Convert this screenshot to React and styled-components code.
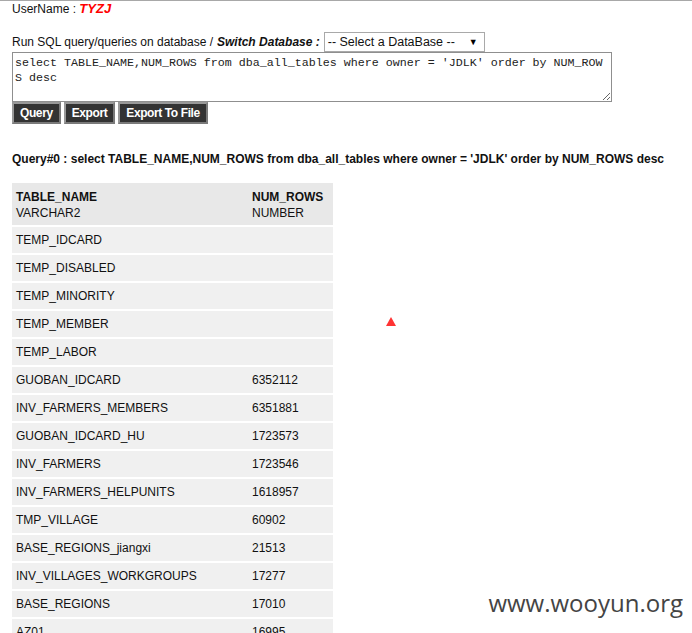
import styled, { createGlobalStyle } from "styled-components";

const rows = [
  ["TEMP_IDCARD", ""],
  ["TEMP_DISABLED", ""],
  ["TEMP_MINORITY", ""],
  ["TEMP_MEMBER", ""],
  ["TEMP_LABOR", ""],
  ["GUOBAN_IDCARD", "6352112"],
  ["INV_FARMERS_MEMBERS", "6351881"],
  ["GUOBAN_IDCARD_HU", "1723573"],
  ["INV_FARMERS", "1723546"],
  ["INV_FARMERS_HELPUNITS", "1618957"],
  ["TMP_VILLAGE", "60902"],
  ["BASE_REGIONS_jiangxi", "21513"],
  ["INV_VILLAGES_WORKGROUPS", "17277"],
  ["BASE_REGIONS", "17010"],
  ["AZ01", "16995"],
];

const sql = "select TABLE_NAME,NUM_ROWS from dba_all_tables where owner = 'JDLK' order by NUM_ROWS desc";

export default function App() {
  return (
    <>
      <Global />
      <Page>
        <UserLine>
          UserName : <UserName>TYZJ</UserName>
        </UserLine>

        <DbLine>
          Run SQL query/queries on database / <b><i>Switch Database :</i></b>
          <DbSelect>
            <span>-- Select a DataBase --</span>
            <Arrow>▼</Arrow>
          </DbSelect>
        </DbLine>

        <SqlBox defaultValue={sql} spellCheck={false} />

        <ButtonRow>
          <Btn>Query</Btn>
          <Btn>Export</Btn>
          <Btn>Export To File</Btn>
        </ButtonRow>

        <QueryTitle>Query#0 : {sql}</QueryTitle>

        <Result>
          <thead>
            <tr>
              <HeadCell>
                <b>TABLE_NAME</b>
                <br />
                VARCHAR2
              </HeadCell>
              <HeadCell>
                <b>NUM_ROWS</b>
                <br />
                NUMBER
              </HeadCell>
            </tr>
          </thead>
          <tbody>
            {rows.map(([name, num]) => (
              <tr key={name}>
                <Cell>{name}</Cell>
                <Cell>{num}</Cell>
              </tr>
            ))}
          </tbody>
        </Result>

        <Marker />
        <Watermark>www.wooyun.org</Watermark>
      </Page>
    </>
  );
}

const Global = createGlobalStyle`
  html, body {
    margin: 0;
    padding: 0;
    background: #fff;
  }
  body {
    border-top: 1px solid #a8a8a8;
    font-family: "Liberation Sans", Arial, sans-serif;
    color: #111;
    overflow: hidden;
  }
`;

const Page = styled.div`
  position: relative;
  padding: 0 12px;
  height: 632px;
  overflow: hidden;
`;

const UserLine = styled.div`
  font-size: 12px;
  line-height: 15px;
`;

const UserName = styled.span`
  color: #f00;
  font-weight: 700;
  font-style: italic;
  font-size: 13px;
`;

const DbLine = styled.div`
  display: flex;
  align-items: center;
  margin-top: 15px;
  font-size: 12px;
  height: 20px;

  b {
    margin-left: 4px;
  }
`;

const DbSelect = styled.div`
  display: flex;
  align-items: center;
  justify-content: space-between;
  box-sizing: border-box;
  width: 161px;
  height: 20px;
  margin-left: 4px;
  padding: 0 6px 0 3px;
  border: 1px solid #a9a9a9;
  font-size: 12.5px;
  background: #fff;
`;

const Arrow = styled.span`
  font-size: 9px;
  color: #000;
`;

const SqlBox = styled.textarea`
  display: block;
  box-sizing: border-box;
  width: 600px;
  height: 50px;
  margin: 0;
  padding: 3px 2px;
  border: 1px solid #8f8f8f;
  font-family: "Liberation Mono", "Courier New", monospace;
  font-size: 11.67px;
  line-height: 15px;
  color: #222;
  resize: vertical;
  overflow: hidden;
  word-break: break-all;
`;

const ButtonRow = styled.div`
  display: flex;
  gap: 3px;
`;

const Btn = styled.button`
  height: 22px;
  padding: 0 6px;
  border: 2px solid #7a7a7a;
  border-top-color: #999;
  border-left-color: #999;
  background: #333;
  color: #fff;
  font-family: "Liberation Sans", Arial, sans-serif;
  font-weight: 700;
  font-size: 12px;
  letter-spacing: -0.4px;
`;

const QueryTitle = styled.div`
  margin-top: 28px;
  font-size: 12px;
  font-weight: 700;
  line-height: 14px;
`;

const Result = styled.table`
  margin-top: 17px;
  width: 321px;
  border-collapse: collapse;
  font-size: 12px;
`;

const HeadCell = styled.th`
  text-align: left;
  font-weight: 400;
  background: #e8e8e8;
  padding: 6px 4px 4px;
  line-height: 16px;
  vertical-align: top;
  border-bottom: 2px solid #fff;

  &:first-child {
    width: 228px;
  }
`;

const Cell = styled.td`
  height: 26px;
  padding: 0 4px;
  background: #f0f0f0;
  border-bottom: 2px solid #fff;
  white-space: nowrap;
`;

const Marker = styled.div`
  position: absolute;
  left: 386px;
  top: 316px;
  width: 0;
  height: 0;
  border-left: 5px solid transparent;
  border-right: 5px solid transparent;
  border-bottom: 9px solid #ff3333;
`;

const Watermark = styled.div`
  position: absolute;
  right: 9px;
  top: 585px;
  font-family: "Open Sans", sans-serif;
  font-size: 24px;
  color: #444;
`;
